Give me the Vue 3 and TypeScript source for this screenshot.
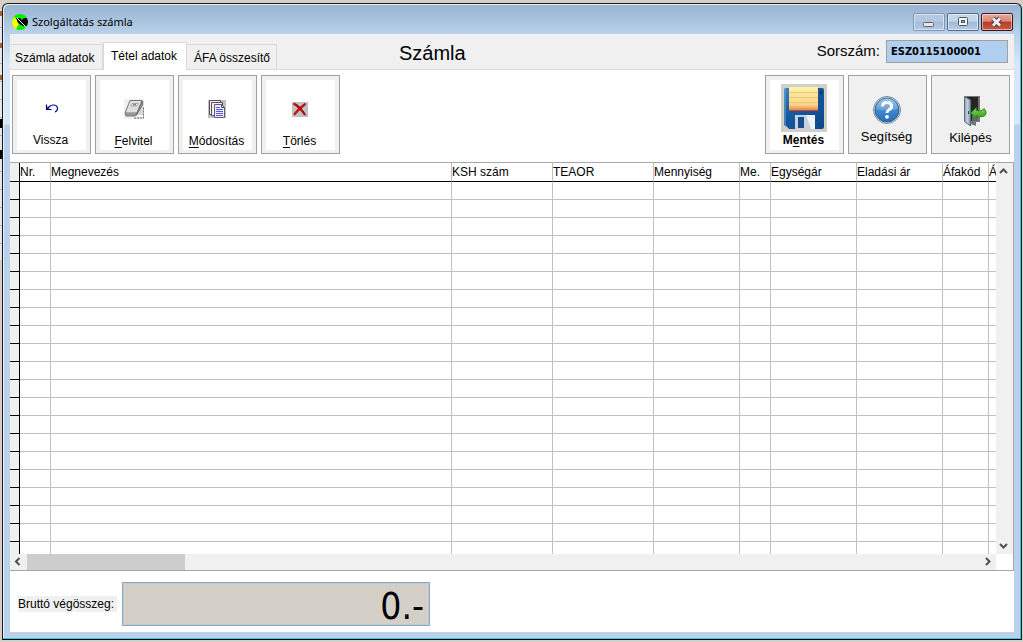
<script setup lang="ts">
import { ref } from 'vue'

interface Column {
  key: string
  label: string
}

const tabs: string[] = ['Számla adatok', 'Tétel adatok', 'ÁFA összesítő']
const activeTab = ref<number>(1)
const invoiceNumber = ref<string>('ESZ0115100001')
const grossTotal = ref<string>('0.-')

const columns: Column[] = [
  { key: 'nr', label: 'Nr.' },
  { key: 'name', label: 'Megnevezés' },
  { key: 'ksh', label: 'KSH szám' },
  { key: 'teaor', label: 'TEAOR' },
  { key: 'qty', label: 'Mennyiség' },
  { key: 'unit', label: 'Me.' },
  { key: 'price', label: 'Egységár' },
  { key: 'sale', label: 'Eladási ár' },
  { key: 'vat', label: 'Áfakód' },
  { key: 'vatpct', label: 'Á' },
]
const rowCount = 21
</script>

<template>
  <div class="desktop">
    <main class="window">
      <header class="titlebar">
        <svg class="app-icon" viewBox="0 0 16 16" aria-hidden="true">
          <circle cx="8" cy="8" r="8" fill="#00f000" />
          <path d="M2 3 L8 8 L4 15 A8 8 0 0 1 2 3Z" fill="#ffff00" />
          <path d="M4 4 H8 L10 6 L12 4 H15 L16 8 L15 12 H11 L9 11 L6 9Z" fill="#000" />
          <path d="M5 4 L14 13" stroke="#fff" stroke-width="1" />
        </svg>
        <h1 class="title">Szolgáltatás számla</h1>
        <div class="window-buttons">
          <button type="button" class="wb wb-min" aria-label="Kis méret">
            <svg viewBox="0 0 30 16"><rect x="9.500" y="8.500" width="10" height="4" rx="1" fill="#e8e8e0" stroke="#5c6370" /></svg>
          </button>
          <button type="button" class="wb" aria-label="Teljes méret">
            <svg viewBox="0 0 30 16">
              <rect x="10.500" y="3.500" width="9" height="8" rx="1" fill="#f4f4f4" stroke="#4c5868" />
              <rect x="13.500" y="6.500" width="3" height="2" fill="#8fa6c0" stroke="#4c5868" />
            </svg>
          </button>
          <button type="button" class="wb wb-close" aria-label="Bezárás">
            <svg viewBox="0 0 30 16">
              <path d="M11 4.500 L18 11.500 M18 4.500 L11 11.500" stroke="#4b4050" stroke-width="5" />
              <path d="M11 4.500 L18 11.500 M18 4.500 L11 11.500" stroke="#f6f2f2" stroke-width="2.800" />
            </svg>
          </button>
        </div>
      </header>

      <section class="client">
        <div class="head">
          <nav class="tabs" role="tablist">
            <button
              v-for="(tab, i) in tabs"
              :key="tab"
              type="button"
              role="tab"
              class="tab"
              :class="{ active: i === activeTab }"
              :aria-selected="i === activeTab"
              @click="activeTab = i"
            >{{ tab }}</button>
          </nav>
          <h2 class="doc-title">Számla</h2>
          <div class="serial">
            <label for="serial">Sorszám:</label>
            <input id="serial" v-model="invoiceNumber" type="text" readonly />
          </div>
        </div>

        <div class="toolbar">
          <button type="button" class="tool back">
            <span class="face">
              <svg class="icon" viewBox="0 0 20 20" aria-hidden="true">
                <path d="M5.500 6.500 V11.500 H10.500 M5.500 11.500 L8.500 8.500 Q10 7 12 7 H13 Q16.500 7.500 16.500 10.500 Q16.500 13 14 14" fill="none" stroke="#000090" stroke-width="1.200" />
                <path d="M5 7 V12 H10Z" fill="#000090" fill-opacity=".45" />
              </svg>
              <span class="caption">Vissza</span>
            </span>
          </button>
          <button type="button" class="tool">
            <span class="face">
              <svg class="icon" viewBox="0 0 20 20" aria-hidden="true">
                <rect width="20" height="20" fill="#f0f0f0" />
                <path d="M15 3 H20 V19 H11 L8 16Z" fill="#fafafa" stroke="#aaa" stroke-width=".6" />
                <path d="M15 9 H19 M14 11 H19 M13 13 H19 M12 15 H19" stroke="#b4b4b4" />
                <path d="M6 1.500 H18 L13 14 H1Z" fill="#dedede" stroke="#777" />
                <path d="M1 14 L2 17 H11 L13 14 M13 14 L18.500 2 V6 L12 17" fill="#999" stroke="#666" stroke-width=".8" />
                <path d="M8 4.500 H14 L13 7 H7Z" fill="#f7f7f7" stroke="#888" stroke-width=".7" />
                <path d="M9 5.800 H12" stroke="#555" />
                <path d="M10 19 H19.500 V8" fill="none" stroke="#777" stroke-dasharray="2 1" />
              </svg>
              <span class="caption"><u>F</u>elvitel</span>
            </span>
          </button>
          <button type="button" class="tool">
            <span class="face">
              <svg class="icon" viewBox="0 0 20 20" aria-hidden="true">
                <rect x="1" y="1" width="18" height="18" fill="#c4bfc6" />
                <path d="M2.500 1.500 H13.500 V15.500 H2.500Z" fill="#f2f0e8" stroke="#55505c" />
                <path d="M4.500 3.500 H15.500 V16.500 H4.500Z" fill="#f5f3ee" stroke="#55505c" />
                <path d="M7.500 5.500 H14.500 L17.500 8.500 V18.500 H7.500Z" fill="#ececff" stroke="#605a78" />
                <path d="M14.500 5.500 V8.500 H17.500" fill="none" stroke="#504a60" />
                <path d="M9 8.500 H13 M9 10.500 H16 M9 12.500 H16 M9 14.500 H16 M9 16.500 H16" stroke="#5858e0" />
              </svg>
              <span class="caption"><u>M</u>ódosítás</span>
            </span>
          </button>
          <button type="button" class="tool">
            <span class="face">
              <svg class="icon" viewBox="0 0 20 20" aria-hidden="true">
                <rect x="2" y="3" width="16" height="15" fill="#c0c0c0" />
                <path d="M3.500 4.500 Q10 8 15 16 M15.500 4.500 Q9 9 4 15.500" fill="none" stroke="#d00000" stroke-width="2" />
                <path d="M5.500 4.500 Q11 8 16 16.500 M16 5.500 Q10 10 4.500 16.500" fill="none" stroke="#601010" stroke-width=".6" />
              </svg>
              <span class="caption"><u>T</u>örlés</span>
            </span>
          </button>
          <span class="spacer"></span>
          <button type="button" class="tool save">
            <span class="face">
              <svg class="icon" viewBox="0 0 46 48" aria-hidden="true">
                <defs>
                  <linearGradient id="paper" x1="0" y1="0" x2="0" y2="1">
                    <stop offset="0" stop-color="#fff3a8" /><stop offset=".75" stop-color="#fbd48a" /><stop offset="1" stop-color="#e07840" />
                  </linearGradient>
                  <linearGradient id="disk" x1="0" y1="0" x2="1" y2="1">
                    <stop offset="0" stop-color="#3c83bd" /><stop offset=".4" stop-color="#17589f" /><stop offset="1" stop-color="#0d478a" />
                  </linearGradient>
                </defs>
                <rect width="46" height="48" fill="#d2cec8" />
                <path d="M5 4 H41 Q43 4 43 6 V43 Q43 45 41 45 H8 L3 41 V6 Q3 4 5 4Z" fill="url(#disk)" />
                <path d="M4 5 V41 L8 45" fill="none" stroke="#69a8d4" />
                <rect x="8" y="3" width="29" height="24" fill="url(#paper)" />
                <path d="M8 8.500 H37 M8 13.500 H37 M8 18.500 H37" stroke="#e8c878" />
                <path d="M8 26.500 H37" stroke="#c94a2c" />
                <path d="M14 31 H34 V45 H14Z" fill="#c4d2df" />
                <path d="M25 31 H34 V45 H30Z" fill="#eef3f7" />
                <rect x="17" y="33" width="6" height="11" fill="#174d8d" />
                <rect x="39" y="7" width="2" height="3" fill="#0a2c5a" />
              </svg>
              <span class="caption">M<u>e</u>ntés</span>
            </span>
          </button>
          <button type="button" class="tool plain help">
            <span class="face">
              <svg class="icon" viewBox="0 0 30 30" aria-hidden="true">
                <defs>
                  <linearGradient id="ball" x1="0" y1="0" x2="0" y2="1">
                    <stop offset="0" stop-color="#8abce8" /><stop offset=".5" stop-color="#4288cc" /><stop offset="1" stop-color="#2870ba" />
                  </linearGradient>
                </defs>
                <circle cx="15" cy="15" r="13.500" fill="#e4e9ee" stroke="#7b8792" />
                <circle cx="15" cy="15" r="12" fill="url(#ball)" stroke="#265f9b" />
                <path d="M4 14 A11 11 0 0 1 26 14 Q15 17 4 14Z" fill="#fff" fill-opacity=".18" />
                <path d="M10.500 11.500 Q10.700 7.500 15 7.500 Q19.500 7.500 19.500 11.200 Q19.500 13.500 17 14.700 Q15 15.800 15 18" fill="none" stroke="#fff" stroke-width="3" />
                <circle cx="15" cy="21.800" r="1.900" fill="#fff" />
              </svg>
              <span class="caption">Segítség</span>
            </span>
          </button>
          <button type="button" class="tool plain exit">
            <span class="face">
              <svg class="icon" viewBox="0 0 24 32" aria-hidden="true">
                <defs>
                  <linearGradient id="door" x1="0" y1="0" x2="1" y2="0">
                    <stop offset="0" stop-color="#8ba0b2" /><stop offset=".5" stop-color="#bcd0df" /><stop offset="1" stop-color="#7d92a4" />
                  </linearGradient>
                  <linearGradient id="arrow" x1="0" y1="0" x2="0" y2="1">
                    <stop offset="0" stop-color="#86dd55" /><stop offset="1" stop-color="#289815" />
                  </linearGradient>
                </defs>
                <path d="M2 1 H17 V27 H13 V31 L2 27Z" fill="#767676" />
                <path d="M4 2 H15 V26 H4Z" fill="#252525" />
                <path d="M9 21 L15 16 V26 H9Z" fill="#686868" />
                <path d="M1.500 1.500 L7.500 5 V31 L1.500 26.500Z" fill="url(#door)" stroke="#5b6d7b" />
                <path d="M5.500 16 V19" stroke="#33414c" />
                <path d="M7.500 18 L13.500 12.500 V15.500 Q18.500 17 21 13.500 Q24.500 17 22.500 20 Q19.500 23 13.500 20.800 V24Z" fill="url(#arrow)" stroke="#278216" stroke-width=".9" />
              </svg>
              <span class="caption">Kilépés</span>
            </span>
          </button>
        </div>

        <div class="grid">
          <div class="viewport">
            <table>
              <colgroup>
                <col class="c-sel" />
                <col v-for="c in columns" :key="c.key" :class="'c-' + c.key" />
              </colgroup>
              <thead>
                <tr>
                  <td class="sel"></td>
                  <th v-for="c in columns" :key="c.key" scope="col">{{ c.label }}</th>
                </tr>
              </thead>
              <tbody>
                <tr v-for="r in rowCount" :key="r">
                  <td class="sel"></td>
                  <td v-for="c in columns" :key="c.key"></td>
                </tr>
              </tbody>
            </table>
          </div>
          <div class="vbar">
            <button type="button" class="arrow" aria-label="Fel"><svg viewBox="0 0 16 16"><path d="M4 10 L7.500 6.500 L11 10" /></svg></button>
            <button type="button" class="arrow" aria-label="Le"><svg viewBox="0 0 16 16"><path d="M4 6 L7.500 9.500 L11 6" /></svg></button>
          </div>
          <div class="hbar">
            <button type="button" class="arrow" aria-label="Balra"><svg viewBox="0 0 16 16"><path d="M9.500 4 L6 7.500 L9.500 11" /></svg></button>
            <div class="track"><div class="thumb"></div></div>
            <button type="button" class="arrow" aria-label="Jobbra"><svg viewBox="0 0 16 16"><path d="M6 4 L9.500 7.500 L6 11" /></svg></button>
          </div>
        </div>

        <footer class="footer">
          <label for="total">Bruttó végösszeg:</label>
          <input id="total" v-model="grossTotal" type="text" readonly />
        </footer>
      </section>
    </main>
  </div>
</template>

<style>
body {
  margin: 0;
  background: #d4d0c8;
}
</style>

<style scoped>
* {
  box-sizing: border-box;
}
.desktop {
  height: 100vh;
  padding: 3px 1px 2px 2px;
  overflow: hidden;
  background:
    linear-gradient(#000, #000) 0 119px / 2px 9px no-repeat,
    linear-gradient(#000, #000) 0 150px / 2px 9px no-repeat,
    linear-gradient(#a86430, #a86430) 0 11px / 2px 5px no-repeat,
    linear-gradient(#a86430, #a86430) 0 43px / 2px 5px no-repeat,
    linear-gradient(#a86430, #a86430) 0 75px / 2px 5px no-repeat,
    repeating-linear-gradient(#e6e6ee 0 17px, #b4b4bc 17px 18px) 0 10px / 2px 250px no-repeat,
    #d4d0c8;
  font: 12px/14px "Liberation Sans", Arial, sans-serif;
  color: #000;
}
button {
  font: inherit;
  color: inherit;
  padding: 0;
  margin: 0;
  border: 0;
  background: none;
}
.window {
  height: 100%;
  display: flex;
  flex-direction: column;
  padding: 0 7px 7px;
  border: 1px solid #1a1a1a;
  border-bottom-color: #000;
  border-radius: 6px 6px 0 0;
  box-shadow: inset -1px -1px 0 #30c8e8, inset 1px 1px 0 #e8f0f8;
  background: linear-gradient(#98b3d0 0, #b9d1ea 30px, #d6e6f6 60px, #d8e8f8 120px, #b9d1ea 121px);
}
.titlebar {
  flex: none;
  height: 30px;
  display: flex;
  align-items: center;
  padding: 6px 1px 0 2px;
}
.app-icon {
  width: 16px;
  height: 16px;
}
.title {
  flex: 1;
  margin: 0 0 0 4px;
  font: 400 11px/16px "Noto Sans", "Open Sans", sans-serif;
}
.window-buttons {
  display: flex;
  gap: 2px;
}
.wb {
  width: 32px;
  height: 18px;
  border: 1px solid #566b88;
  border-radius: 2px;
  box-shadow: inset 0 0 0 1px rgba(255, 255, 255, 0.5);
  background: linear-gradient(#c4d6ea 0 45%, #a0bad6 50%, #b6cee6);
}
.wb-min {
  border-color: #8098b8;
  background: linear-gradient(#b4c9e1 0 45%, #a4bddb 50%, #b2cae5);
}
.wb-close {
  border-color: #43141c;
  background: linear-gradient(#e8a898 0, #d88878 45%, #b83c28 50%, #c85c44);
}
.wb svg {
  display: block;
  width: 30px;
  height: 16px;
}
.client {
  flex: 1;
  min-height: 0;
  display: flex;
  flex-direction: column;
  background: #fff;
}
.head {
  flex: none;
  height: 36px;
  display: flex;
  align-items: flex-end;
  background: #f0f0f0;
  box-shadow: inset 0 -1px 0 #d9d9d9;
}
.tabs {
  flex: none;
  width: 389px;
  display: flex;
  align-items: flex-end;
}
.tab {
  width: 90px;
  height: 26px;
  padding: 2px 0 0 7px;
  border: 1px solid #d9d9d9;
  border-left-width: 0;
  text-align: left;
  white-space: nowrap;
}
.tab:first-child {
  width: 93px;
  padding-left: 5px;
}
.tab.active {
  width: 84px;
  height: 28px;
  padding: 0 0 2px 7px;
  border-left-width: 1px;
  border-bottom: 0;
  background: #fff;
}
.doc-title {
  flex: 1;
  align-self: flex-start;
  margin: 7px 0 0;
  font-size: 20px;
  font-weight: 400;
  line-height: 24px;
}
.serial {
  display: flex;
  align-items: center;
  align-self: flex-start;
  gap: 6px;
  margin: 6px 6px 0 0;
  font-size: 15px;
}
.serial label {
  padding-bottom: 2px;
}
.serial input {
  width: 122px;
  height: 23px;
  padding: 0 4px;
  border: 1px solid #a0a0a0;
  border-radius: 0;
  outline: 0;
  background: #b0ceee;
  font: 700 11px/14px "DejaVu Sans Condensed", "DejaVu Sans", sans-serif;
}
.toolbar {
  flex: none;
  display: flex;
  gap: 4px;
  padding: 5px 4px 8px 2px;
}
.spacer {
  flex: 1;
}
.tool {
  width: 79px;
  height: 79px;
  padding: 4px 4px 3px;
  border: 1px solid #a0a0a0;
  background: #f0f0f0;
}
.face {
  height: 100%;
  display: flex;
  flex-direction: column;
  align-items: center;
  justify-content: flex-end;
  padding: 0 2px 2px 0;
  background: #fff;
}
.icon {
  width: 20px;
  height: 20px;
  margin-bottom: 15px;
}
.back .face {
  padding-bottom: 3px;
}
.save .face {
  padding-bottom: 3px;
}
.save .icon {
  width: 46px;
  height: 48px;
  margin-bottom: 1px;
}
.save .caption {
  font-weight: 700;
}
.plain .face {
  padding-bottom: 6px;
  background: #f0f0f0;
  font-size: 13px;
}
.help .icon {
  width: 30px;
  height: 30px;
  margin-bottom: 5px;
}
.exit .face {
  padding: 0 0 5px;
}
.exit .icon {
  width: 24px;
  height: 32px;
  margin: 0 0 4px 9px;
}
u {
  text-underline-offset: 2px;
}
.grid {
  flex: 1;
  min-height: 0;
  display: grid;
  grid-template: minmax(0, 1fr) 16px / minmax(0, 1fr) 17px;
  border: 1px solid #a8a8ac;
  border-left: 0;
}
.viewport {
  overflow: hidden;
}
table {
  width: 100%;
  table-layout: fixed;
  border-collapse: separate;
  border-spacing: 0;
}
.c-sel { width: 10px; }
.c-nr, .c-unit { width: 31px; }
.c-name { width: 401px; }
.c-ksh, .c-teaor { width: 101px; }
.c-qty, .c-price, .c-sale { width: 86px; }
.c-vat { width: 46px; }
th,
td {
  height: 18px;
  padding: 0;
  overflow: hidden;
  border-right: 1px solid #c0c0c0;
  border-bottom: 1px solid #c0c0c0;
  text-align: left;
  font-weight: 400;
  white-space: nowrap;
}
th:last-child,
td:last-child {
  border-right: 0;
}
thead th,
thead td {
  height: 19px;
  border-bottom-color: #000;
}
td.sel {
  border-color: #000;
  background: #f0f0f0;
}
.vbar {
  display: flex;
  flex-direction: column;
  justify-content: space-between;
  background: #f0f0f0;
}
.hbar {
  display: flex;
  background: #f0f0f0;
}
.arrow {
  flex: none;
  width: 16px;
  height: 16px;
}
.arrow svg {
  display: block;
  width: 16px;
  height: 16px;
}
.arrow path {
  fill: none;
  stroke: #505050;
  stroke-width: 2;
}
.track {
  flex: 1;
  padding-left: 1px;
}
.thumb {
  width: 16.6%;
  height: 100%;
  background: #cdcdcd;
}
.footer {
  flex: none;
  display: flex;
  align-items: center;
  gap: 5px;
  padding: 11px 8px 6px;
}
.footer label {
  width: 99px;
  line-height: 16px;
  background: #f0f0f0;
  white-space: nowrap;
}
.footer input {
  width: 308px;
  height: 44px;
  padding: 4px 5px 0;
  border: 1px solid #a0a0a8;
  border-radius: 0;
  outline: 0;
  box-shadow: inset 0 0 0 1px #b0ceee;
  background: #d4d0c8;
  font: 37px/38px "DejaVu Sans Condensed", "DejaVu Sans", sans-serif;
  text-align: right;
}
</style>
